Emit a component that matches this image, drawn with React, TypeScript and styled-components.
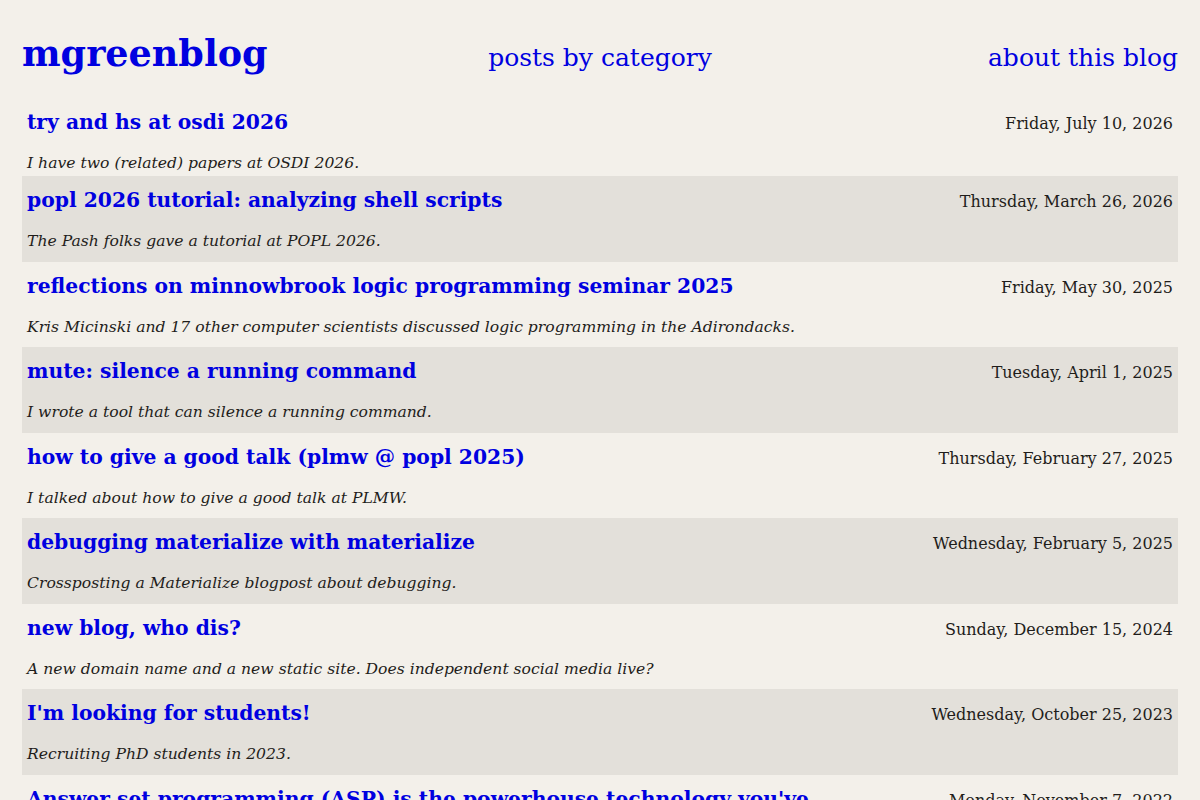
import React from "react";
import styled, { createGlobalStyle } from "styled-components";

const GlobalStyle = createGlobalStyle`
  html, body {
    margin: 0;
    padding: 0;
    background: #f3f0ea;
  }
  body {
    font-family: "DejaVu Serif", "Liberation Serif", serif;
    color: #1f1d1a;
  }
`;

const Page = styled.div`
  padding: 22px 22px 0 22px;
`;

const Header = styled.header`
  display: grid;
  grid-template-columns: 1fr auto 1fr;
  align-items: baseline;
  height: 66px;
  padding-top: 10px;
  box-sizing: border-box;
`;

const SiteTitle = styled.a`
  font-size: 36.5px;
  font-weight: bold;
  color: #0000e0;
  text-decoration: none;
  justify-self: start;
`;

const NavLink = styled.a<{ $align: "center" | "end" }>`
  font-size: 25px;
  color: #0000e0;
  text-decoration: none;
  justify-self: ${(p) => p.$align};
`;

const PostList = styled.div`
  display: flex;
  flex-direction: column;
  margin-top: 10px;
`;

const Post = styled.article<{ $shaded: boolean }>`
  height: 85.5px;
  box-sizing: border-box;
  padding: 10px 5px 0 5px;
  background: ${(p) => (p.$shaded ? "#e3e0da" : "transparent")};
  display: flex;
  flex-direction: column;

  &:first-child {
    height: 78px;
  }
`;

const PostHead = styled.div`
  display: flex;
  justify-content: space-between;
  align-items: baseline;
  gap: 24px;
`;

const PostTitle = styled.a`
  max-width: 70%;
  font-size: 20.3px;
  font-weight: bold;
  line-height: 28px;
  color: #0000e0;
  text-decoration: none;
`;

const PostDate = styled.span`
  font-size: 16px;
  white-space: nowrap;
`;

const Summary = styled.p`
  margin: 18px 0 0 0;
  font-size: 15.6px;
  font-style: italic;
`;

const posts = [
  {
    title: "try and hs at osdi 2026",
    date: "Friday, July 10, 2026",
    summary: "I have two (related) papers at OSDI 2026.",
  },
  {
    title: "popl 2026 tutorial: analyzing shell scripts",
    date: "Thursday, March 26, 2026",
    summary: "The Pash folks gave a tutorial at POPL 2026.",
  },
  {
    title: "reflections on minnowbrook logic programming seminar 2025",
    date: "Friday, May 30, 2025",
    summary:
      "Kris Micinski and 17 other computer scientists discussed logic programming in the Adirondacks.",
  },
  {
    title: "mute: silence a running command",
    date: "Tuesday, April 1, 2025",
    summary: "I wrote a tool that can silence a running command.",
  },
  {
    title: "how to give a good talk (plmw @ popl 2025)",
    date: "Thursday, February 27, 2025",
    summary: "I talked about how to give a good talk at PLMW.",
  },
  {
    title: "debugging materialize with materialize",
    date: "Wednesday, February 5, 2025",
    summary: "Crossposting a Materialize blogpost about debugging.",
  },
  {
    title: "new blog, who dis?",
    date: "Sunday, December 15, 2024",
    summary:
      "A new domain name and a new static site. Does independent social media live?",
  },
  {
    title: "I'm looking for students!",
    date: "Wednesday, October 25, 2023",
    summary: "Recruiting PhD students in 2023.",
  },
  {
    title:
      "Answer set programming (ASP) is the powerhouse technology you've never heard of",
    date: "Monday, November 7, 2022",
    summary: "",
  },
];

export default function App() {
  return (
    <>
      <GlobalStyle />
      <Page>
        <Header>
          <SiteTitle href="#">mgreenblog</SiteTitle>
          <NavLink href="#" $align="center">
            posts by category
          </NavLink>
          <NavLink href="#" $align="end">
            about this blog
          </NavLink>
        </Header>
        <PostList>
          {posts.map((p, i) => (
            <Post key={p.title} $shaded={i % 2 === 1}>
              <PostHead>
                <PostTitle href="#">{p.title}</PostTitle>
                <PostDate>{p.date}</PostDate>
              </PostHead>
              {p.summary && <Summary>{p.summary}</Summary>}
            </Post>
          ))}
        </PostList>
      </Page>
    </>
  );
}
